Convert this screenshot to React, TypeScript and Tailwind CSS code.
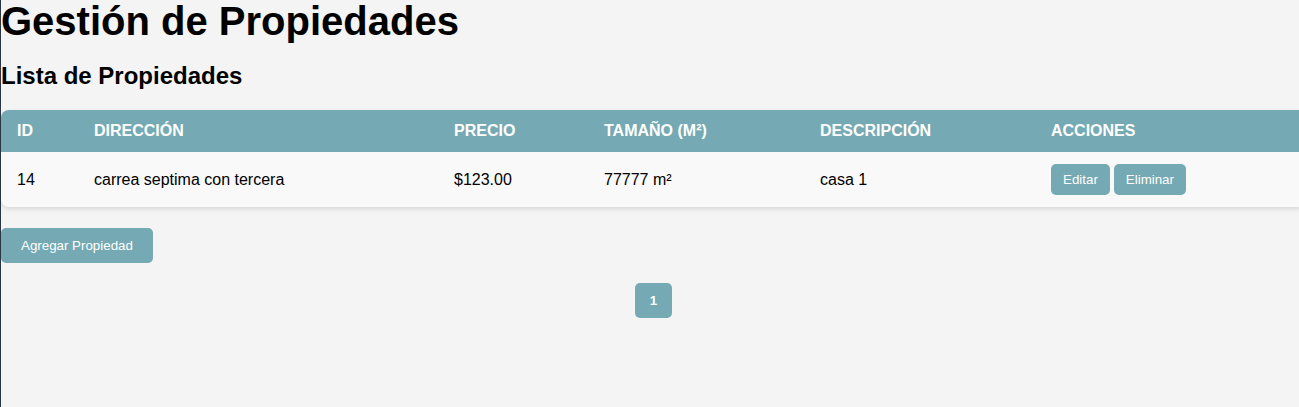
import React from "react";

const teal = "bg-[#75a9b3]";

export default function App() {
  return (
    <div className="min-h-[407px] w-[1299px] overflow-hidden bg-[#f4f4f4] border-l border-[#2b3645] font-['Liberation_Sans',Arial,sans-serif] text-black">
      <div className="w-[1305px]">
        <h1 className="text-[40px] font-bold leading-[40px] m-0 pt-[1px]">Gestión de Propiedades</h1>
        <h2 className="text-[24px] font-bold leading-[28px] mt-[21px] mb-[20px]">Lista de Propiedades</h2>
        <div className="rounded-lg overflow-hidden shadow-[0_2px_5px_rgba(0,0,0,0.12)] bg-[#f9f9f9]">
          <div className={`${teal} flex h-[42px] items-center text-white font-bold text-[16px]`}>
            <div className="w-[77px] pl-4">ID</div>
            <div className="w-[360px] pl-4">DIRECCIÓN</div>
            <div className="w-[150px] pl-4">PRECIO</div>
            <div className="w-[216px] pl-4">TAMAÑO (M²)</div>
            <div className="w-[231px] pl-4">DESCRIPCIÓN</div>
            <div className="flex-1 pl-4">ACCIONES</div>
          </div>
          <div className="flex h-[55px] items-center text-[16px]">
            <div className="w-[77px] pl-4">14</div>
            <div className="w-[360px] pl-4">carrea septima con tercera</div>
            <div className="w-[150px] pl-4">$123.00</div>
            <div className="w-[216px] pl-4">77777 m²</div>
            <div className="w-[231px] pl-4">casa 1</div>
            <div className="flex-1 pl-4 flex gap-1">
              <button className={`${teal} text-white text-[13.33px] leading-[15px] px-3 py-2 rounded-[5px]`}>Editar</button>
              <button className={`${teal} text-white text-[13.33px] leading-[15px] px-3 py-2 rounded-[5px]`}>Eliminar</button>
            </div>
          </div>
        </div>
        <button className={`${teal} mt-[21px] text-white text-[13.33px] leading-[15px] px-5 py-[10px] rounded-[5px]`}>Agregar Propiedad</button>
        <div className="flex justify-center mt-5">
          <button className={`${teal} text-white font-bold text-[13.33px] leading-[15px] w-[37px] py-[10px] rounded-[5px]`}>1</button>
        </div>
      </div>
    </div>
  );
}
